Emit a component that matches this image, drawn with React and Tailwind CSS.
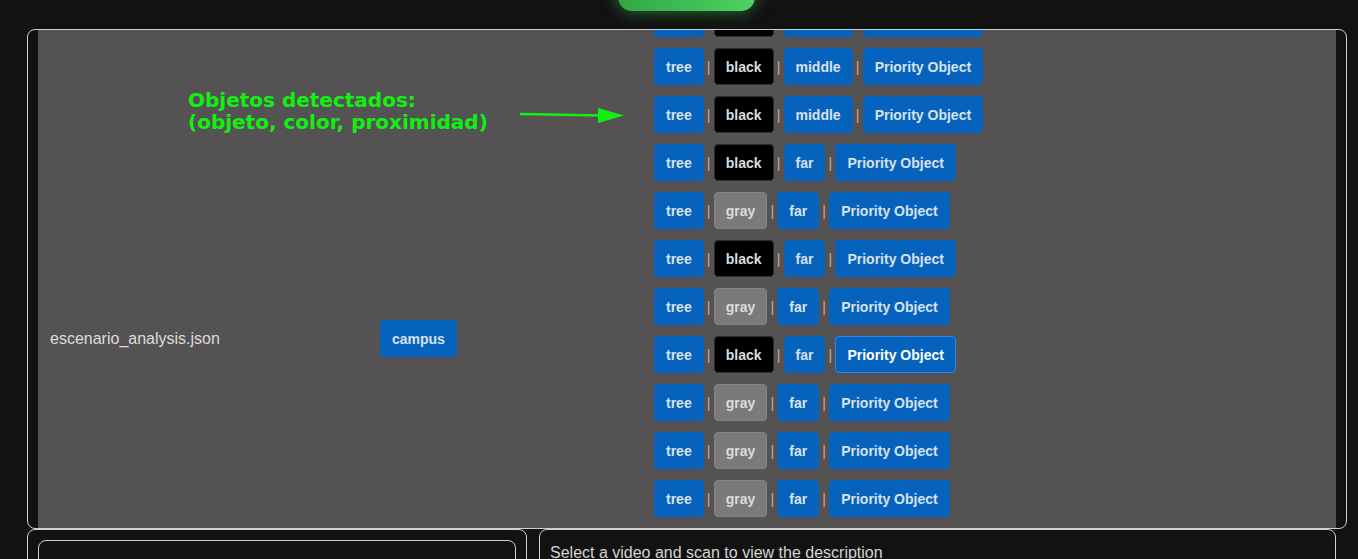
import React from "react";

const rows = [
  ["black", "middle", false],
  ["black", "middle", false],
  ["black", "middle", false],
  ["black", "far", false],
  ["gray", "far", false],
  ["black", "far", false],
  ["gray", "far", false],
  ["black", "far", true],
  ["gray", "far", false],
  ["gray", "far", false],
  ["gray", "far", false],
];

const Chip = ({ tone = "blue", active = false, children }) => {
  const tones = {
    blue: "bg-[#0563be] border-[#0563be] text-[#d9e1ea]",
    black: "bg-black border-[#2e2e2e] text-[#d9dde2]",
    gray: "bg-[#7a7a7a] border-[#858585] text-[#dcdcdc]",
  };
  return (
    <span
      className={`h-[37px] px-[11px] flex items-center rounded-[4px] border text-[14px] font-bold leading-none ${tones[tone]} ${
        active ? "!border-[#2f86e8] !text-white" : ""
      }`}
    >
      {children}
    </span>
  );
};

const Sep = () => (
  <span className="w-[10px] text-center text-[14px] leading-none text-[#cfae8c]">|</span>
);

export default function App() {
  return (
    <div
      className="min-h-screen bg-[#121212] overflow-hidden"
      style={{ fontFamily: '"Liberation Sans", Arial, sans-serif' }}
    >
      {/* top bar with scan button */}
      <div className="h-[29px] flex">
        <div className="ml-[618px] -mt-[34px] w-[137px] h-[45px] rounded-[14px] bg-gradient-to-r from-[#2fa744] to-[#50d364] shadow-[0_0_16px_rgba(60,210,90,0.55)]" />
      </div>

      {/* results table */}
      <div className="ml-[27px] w-[1320px] h-[500px] border border-[#cfcfcf] rounded-lg px-[10px] overflow-hidden">
        <div className="relative h-full bg-[#545253] flex items-start">
          <div className="w-[342px] pl-3 pt-[297px] text-[16px] leading-6 text-[#dcdcdc]">
            escenario_analysis.json
          </div>
          <div className="w-[274px] pt-[290px] flex">
            <Chip>campus</Chip>
          </div>
          <div className="-mt-[30px] flex flex-col gap-[11px]">
            {rows.map(([color, dist, active], i) => (
              <div key={i} className="flex items-center">
                <Chip>tree</Chip>
                <Sep />
                <Chip tone={color}>{color}</Chip>
                <Sep />
                <Chip>{dist}</Chip>
                <Sep />
                <Chip active={active}>Priority Object</Chip>
              </div>
            ))}
          </div>

          {/* annotation */}
          <div
            className="absolute left-[150px] top-[59px] text-[20px] leading-[22px] font-bold text-[#12f012]"
            style={{ fontFamily: '"DejaVu Sans", sans-serif' }}
          >
            <div>Objetos detectados:</div>
            <div>(objeto, color, proximidad)</div>
          </div>
          <svg
            className="absolute left-[482px] top-[77px]"
            width="106"
            height="16"
            viewBox="0 0 106 16"
          >
            <line x1="0" y1="7" x2="82" y2="8.5" stroke="#12f012" strokeWidth="2.5" />
            <polygon points="78,1 104,8.5 78,16" fill="#12f012" />
          </svg>
        </div>
      </div>

      {/* bottom panels */}
      <div className="ml-[27px] flex gap-3">
        <div className="w-[500px] h-[60px] border border-[#cfcfcf] rounded-lg p-[10px]">
          <div className="h-[60px] border border-[#cfcfcf] rounded-lg" />
        </div>
        <div className="w-[797px] h-[60px] border border-[#cfcfcf] rounded-lg px-[10px] pt-[11px] text-[16px] leading-6 text-[#d4d4d4]">
          Select a video and scan to view the description
        </div>
      </div>
    </div>
  );
}
